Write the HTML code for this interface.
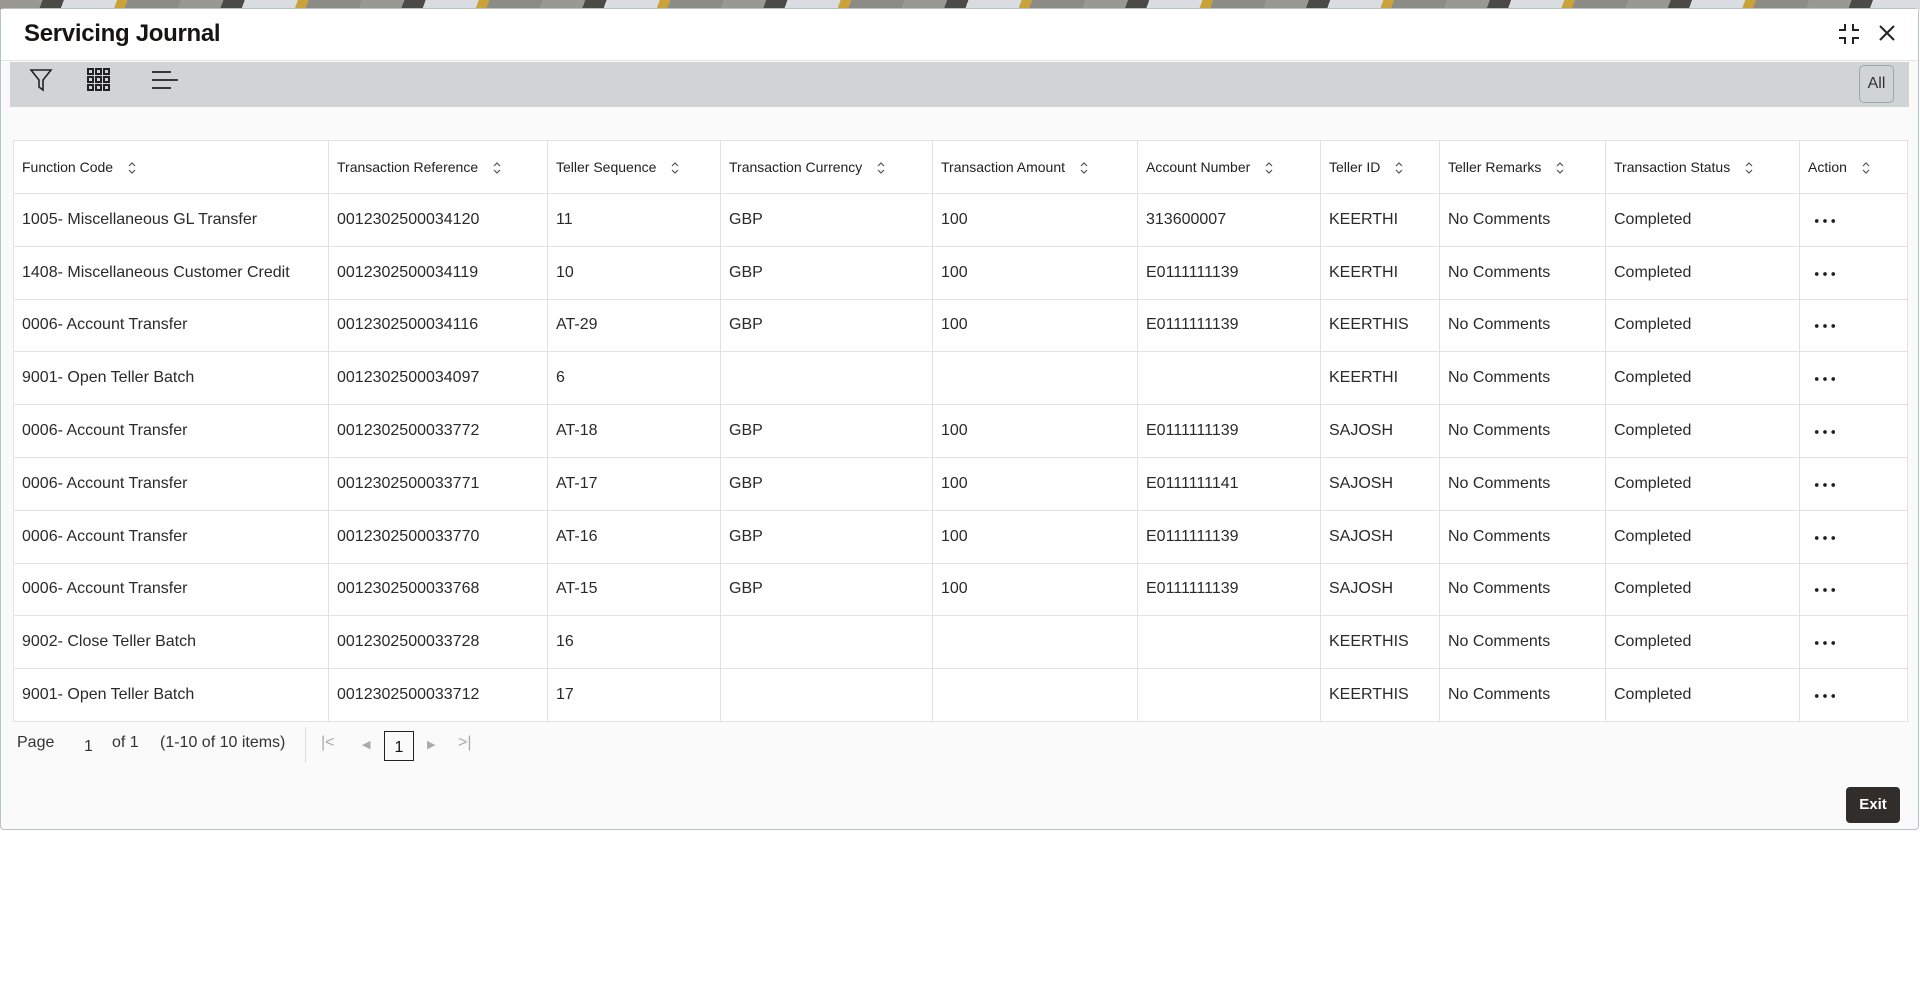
<!DOCTYPE html>
<html><head><meta charset="utf-8"><style>
*{box-sizing:border-box;margin:0;padding:0}
body{width:1920px;height:994px;background:#fff;font-family:"Liberation Sans",sans-serif;color:#161513;position:relative;overflow:hidden}
.strip{position:absolute;left:0;top:0;width:1920px;height:10px;background:repeating-linear-gradient(110deg,#9a9893 0 40px,#4b4a46 40px 60px,#d9dde2 60px 110px,#c9a33a 110px 120px,#8d8b86 120px 170px)}
.panel{position:absolute;left:0;top:8px;width:1919px;height:822px;background:#fafafa;border:1px solid #b7c2c5;border-radius:4px}
.head{position:absolute;left:0;top:0;width:100%;height:52px;background:#fff;border-bottom:1px solid #e4e4e4}
.title{position:absolute;left:23px;top:11px;font-size:24px;font-weight:bold;letter-spacing:-0.3px}
.tb{position:absolute;left:9px;top:53px;width:1899px;height:45px;background:#d0d4d4}
.all{position:absolute;left:1849px;top:3px;width:35px;height:38px;border:1px solid #9aa;border-radius:5px;font-size:16px;line-height:36px;text-align:center;color:#333}
table{position:absolute;left:12px;top:131px;width:1895px;border-collapse:collapse;background:#fff}
td,th{border:1px solid #e2e2e2;text-align:left;padding:0 8px;font-weight:normal;white-space:nowrap}
th{height:53px;font-size:14px;color:#222}
td{height:52.8px;font-size:16px;color:#2a2a2a}
.s{display:inline-block;margin-left:14px;vertical-align:middle}
.dots{padding-left:14px}
.pg{position:absolute;top:725px;font-size:16px;color:#333}
.exit{position:absolute;left:1845px;top:778px;width:54px;height:36px;background:#312d2a;color:#fff;border-radius:4px;font-size:15px;font-weight:bold;text-align:center;line-height:36px}
</style></head><body>
<svg width="0" height="0" style="position:absolute"><defs><symbol id="srt" viewBox="0 0 10 14"><path d="M2 5L5 2L8 5M2 9L5 12L8 9" fill="none" stroke="#555" stroke-width="1.2"/></symbol><symbol id="dt" viewBox="0 0 24 6"><circle cx="3" cy="3" r="2" fill="#222"/><circle cx="12" cy="3" r="2" fill="#222"/><circle cx="21" cy="3" r="2" fill="#222"/></symbol></defs></svg>
<div class="strip"></div>
<div class="panel">
<div class="head"><div class="title">Servicing Journal</div>
<svg style="position:absolute;left:1836px;top:13px" width="24" height="24" viewBox="0 0 24 24" fill="none" stroke="#222" stroke-width="2"><path d="M2 8H8V2M16 2V8H22M2 16H8V22M16 22V16H22"/></svg>
<svg style="position:absolute;left:1876px;top:14px" width="20" height="20" viewBox="0 0 20 20" stroke="#222" stroke-width="2"><path d="M3 3L17 17M17 3L3 17"/></svg>
</div>
<div class="tb">
<svg style="position:absolute;left:19px;top:5px" width="24" height="26" viewBox="0 0 24 26" fill="none" stroke="#222" stroke-width="1.6"><path d="M2 3H22L14 13V23L10 20V13Z"/></svg>
<svg style="position:absolute;left:76px;top:5px" width="26" height="26" viewBox="0 0 26 26" fill="none" stroke="#222" stroke-width="2"><path d="M2 2h5v5h-5zM10 2h5v5h-5zM18 2h5v5h-5zM2 10h5v5h-5zM10 10h5v5h-5zM18 10h5v5h-5zM2 18h5v5h-5zM10 18h5v5h-5zM18 18h5v5h-5z"/></svg>
<svg style="position:absolute;left:141px;top:7px" width="28" height="22" viewBox="0 0 28 22" stroke="#222" stroke-width="1.8"><path d="M1 3H20M1 11H27M1 19H20"/></svg>
<div class="all">All</div></div>
<table>
<tr><th style="width:315px">Function Code<svg class="s" width="10" height="14"><use href="#srt"/></svg></th><th style="width:219px">Transaction Reference<svg class="s" width="10" height="14"><use href="#srt"/></svg></th><th style="width:173px">Teller Sequence<svg class="s" width="10" height="14"><use href="#srt"/></svg></th><th style="width:212px">Transaction Currency<svg class="s" width="10" height="14"><use href="#srt"/></svg></th><th style="width:205px">Transaction Amount<svg class="s" width="10" height="14"><use href="#srt"/></svg></th><th style="width:183px">Account Number<svg class="s" width="10" height="14"><use href="#srt"/></svg></th><th style="width:119px">Teller ID<svg class="s" width="10" height="14"><use href="#srt"/></svg></th><th style="width:166px">Teller Remarks<svg class="s" width="10" height="14"><use href="#srt"/></svg></th><th style="width:194px">Transaction Status<svg class="s" width="10" height="14"><use href="#srt"/></svg></th><th>Action<svg class="s" width="10" height="14"><use href="#srt"/></svg></th></tr>
<tr><td>1005- Miscellaneous GL Transfer</td><td>0012302500034120</td><td>11</td><td>GBP</td><td>100</td><td>313600007</td><td>KEERTHI</td><td>No Comments</td><td>Completed</td><td class="dots"><svg width="22" height="6"><use href="#dt"/></svg></td></tr>
<tr><td>1408- Miscellaneous Customer Credit</td><td>0012302500034119</td><td>10</td><td>GBP</td><td>100</td><td>E0111111139</td><td>KEERTHI</td><td>No Comments</td><td>Completed</td><td class="dots"><svg width="22" height="6"><use href="#dt"/></svg></td></tr>
<tr><td>0006- Account Transfer</td><td>0012302500034116</td><td>AT-29</td><td>GBP</td><td>100</td><td>E0111111139</td><td>KEERTHIS</td><td>No Comments</td><td>Completed</td><td class="dots"><svg width="22" height="6"><use href="#dt"/></svg></td></tr>
<tr><td>9001- Open Teller Batch</td><td>0012302500034097</td><td>6</td><td></td><td></td><td></td><td>KEERTHI</td><td>No Comments</td><td>Completed</td><td class="dots"><svg width="22" height="6"><use href="#dt"/></svg></td></tr>
<tr><td>0006- Account Transfer</td><td>0012302500033772</td><td>AT-18</td><td>GBP</td><td>100</td><td>E0111111139</td><td>SAJOSH</td><td>No Comments</td><td>Completed</td><td class="dots"><svg width="22" height="6"><use href="#dt"/></svg></td></tr>
<tr><td>0006- Account Transfer</td><td>0012302500033771</td><td>AT-17</td><td>GBP</td><td>100</td><td>E0111111141</td><td>SAJOSH</td><td>No Comments</td><td>Completed</td><td class="dots"><svg width="22" height="6"><use href="#dt"/></svg></td></tr>
<tr><td>0006- Account Transfer</td><td>0012302500033770</td><td>AT-16</td><td>GBP</td><td>100</td><td>E0111111139</td><td>SAJOSH</td><td>No Comments</td><td>Completed</td><td class="dots"><svg width="22" height="6"><use href="#dt"/></svg></td></tr>
<tr><td>0006- Account Transfer</td><td>0012302500033768</td><td>AT-15</td><td>GBP</td><td>100</td><td>E0111111139</td><td>SAJOSH</td><td>No Comments</td><td>Completed</td><td class="dots"><svg width="22" height="6"><use href="#dt"/></svg></td></tr>
<tr><td>9002- Close Teller Batch</td><td>0012302500033728</td><td>16</td><td></td><td></td><td></td><td>KEERTHIS</td><td>No Comments</td><td>Completed</td><td class="dots"><svg width="22" height="6"><use href="#dt"/></svg></td></tr>
<tr><td>9001- Open Teller Batch</td><td>0012302500033712</td><td>17</td><td></td><td></td><td></td><td>KEERTHIS</td><td>No Comments</td><td>Completed</td><td class="dots"><svg width="22" height="6"><use href="#dt"/></svg></td></tr>
</table>
<div class="pg" style="left:16px">Page</div>
<div class="pg" style="left:83px;top:729px">1</div>
<div class="pg" style="left:111px">of 1</div>
<div class="pg" style="left:159px">(1-10 of 10 items)</div>
<div style="position:absolute;left:304px;top:718px;width:1px;height:36px;background:#ddd"></div>
<div class="pg" style="left:320px;color:#aaa">|&lt;</div>
<div class="pg" style="left:361px;color:#aaa;font-size:11px;top:729px">◀</div>
<div style="position:absolute;left:383px;top:722px;width:30px;height:30px;border:1px solid #222;font-size:16px;text-align:center;line-height:32px">1</div>
<div class="pg" style="left:426px;color:#aaa;font-size:11px;top:729px">▶</div>
<div class="pg" style="left:457px;color:#aaa">&gt;|</div>
<div class="exit">Exit</div>
</div>
</body></html>
